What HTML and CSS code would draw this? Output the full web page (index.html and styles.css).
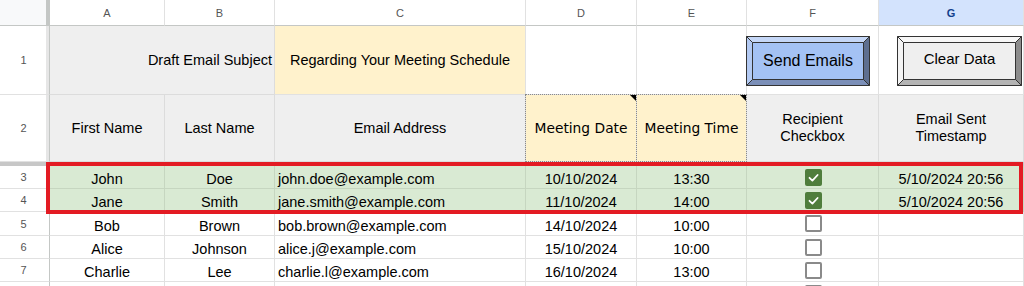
FILE: index.html
```html
<!DOCTYPE html>
<html>
<head>
<meta charset="utf-8">
<link rel="stylesheet" href="styles.css">
</head>
<body>
<div class="sheet">
  <div class="grid">
    <div class="corner"></div>
    <div class="colhead">A</div>
    <div class="colhead">B</div>
    <div class="colhead">C</div>
    <div class="colhead">D</div>
    <div class="colhead">E</div>
    <div class="colhead">F</div>
    <div class="colhead sel">G</div>

    <div class="rownum band">1</div>
    <div class="cell gray right span2">Draft Email Subject</div>
    <div class="cell yellow center">Regarding Your Meeting Schedule</div>
    <div class="cell"></div>
    <div class="cell"></div>
    <div class="cell btncell send-cell">
      <div class="btn send">
        <svg class="bevel" viewBox="0 0 124 50" preserveAspectRatio="none">
          <rect x="6.5" y="6.5" width="111" height="37" fill="#a4c2f4" stroke="#333" stroke-width="1"/>
          <polygon points="0.5,0.5 123.5,0.5 117.5,6.5 6.5,6.5" fill="#c5d7f7" stroke="#333" stroke-width="1"/>
          <polygon points="0.5,0.5 6.5,6.5 6.5,43.5 0.5,49.5" fill="#b3caf3" stroke="#333" stroke-width="1"/>
          <polygon points="123.5,0.5 123.5,49.5 117.5,43.5 117.5,6.5" fill="#5e6f90" stroke="#333" stroke-width="1"/>
          <polygon points="0.5,49.5 6.5,43.5 117.5,43.5 123.5,49.5" fill="#7b8fb8" stroke="#333" stroke-width="1"/>
        </svg>
        <span class="btn-label">Send Emails</span>
      </div>
    </div>
    <div class="cell btncell clear-cell">
      <div class="btn clear">
        <svg class="bevel" viewBox="0 0 125 50" preserveAspectRatio="none">
          <rect x="6.5" y="6.5" width="112" height="37" fill="#efefef" stroke="#333" stroke-width="1"/>
          <polygon points="0.5,0.5 124.5,0.5 118.5,6.5 6.5,6.5" fill="#f7f7f7" stroke="#333" stroke-width="1"/>
          <polygon points="0.5,0.5 6.5,6.5 6.5,43.5 0.5,49.5" fill="#f4f4f4" stroke="#333" stroke-width="1"/>
          <polygon points="124.5,0.5 124.5,49.5 118.5,43.5 118.5,6.5" fill="#8c8c8c" stroke="#333" stroke-width="1"/>
          <polygon points="0.5,49.5 6.5,43.5 118.5,43.5 124.5,49.5" fill="#b4b4b4" stroke="#333" stroke-width="1"/>
        </svg>
        <span class="btn-label small">Clear Data</span>
      </div>
    </div>

    <div class="rownum band">2</div>
    <div class="cell gray center">First Name</div>
    <div class="cell gray center">Last Name</div>
    <div class="cell gray center">Email Address</div>
    <div class="cell yellow center note dotted verd">Meeting Date</div>
    <div class="cell yellow center note dotted verd">Meeting Time</div>
    <div class="cell gray center two">Recipient<br>Checkbox</div>
    <div class="cell gray center two">Email Sent<br>Timestamp</div>

    <div class="freeze"></div>

    <div class="rownum">3</div>
    <div class="cell data green center">John</div>
    <div class="cell data green center">Doe</div>
    <div class="cell data green">john.doe@example.com</div>
    <div class="cell data green center">10/10/2024</div>
    <div class="cell data green center">13:30</div>
    <div class="cell green chk"><span class="box on"><svg viewBox="0 0 17 17"><path d="M4.5 8.8 L7.4 11.6 L12.6 6" fill="none" stroke="#fff" stroke-width="1.8" stroke-linecap="round" stroke-linejoin="round"/></svg></span></div>
    <div class="cell data green center">5/10/2024 20:56</div>

    <div class="rownum">4</div>
    <div class="cell data green center">Jane</div>
    <div class="cell data green center">Smith</div>
    <div class="cell data green">jane.smith@example.com</div>
    <div class="cell data green center">11/10/2024</div>
    <div class="cell data green center">14:00</div>
    <div class="cell green chk"><span class="box on"><svg viewBox="0 0 17 17"><path d="M4.5 8.8 L7.4 11.6 L12.6 6" fill="none" stroke="#fff" stroke-width="1.8" stroke-linecap="round" stroke-linejoin="round"/></svg></span></div>
    <div class="cell data green center">5/10/2024 20:56</div>

    <div class="rownum">5</div>
    <div class="cell data center">Bob</div>
    <div class="cell data center">Brown</div>
    <div class="cell data">bob.brown@example.com</div>
    <div class="cell data center">14/10/2024</div>
    <div class="cell data center">10:00</div>
    <div class="cell chk"><span class="box"></span></div>
    <div class="cell data"></div>

    <div class="rownum">6</div>
    <div class="cell data center">Alice</div>
    <div class="cell data center">Johnson</div>
    <div class="cell data">alice.j@example.com</div>
    <div class="cell data center">15/10/2024</div>
    <div class="cell data center">10:00</div>
    <div class="cell chk"><span class="box"></span></div>
    <div class="cell data"></div>

    <div class="rownum">7</div>
    <div class="cell data center">Charlie</div>
    <div class="cell data center">Lee</div>
    <div class="cell data">charlie.l@example.com</div>
    <div class="cell data center">16/10/2024</div>
    <div class="cell data center">13:00</div>
    <div class="cell chk"><span class="box"></span></div>
    <div class="cell data"></div>

    <div class="rownum"></div>
    <div class="cell data"></div>
    <div class="cell data"></div>
    <div class="cell data"></div>
    <div class="cell data"></div>
    <div class="cell data"></div>
    <div class="cell chk"><span class="box"></span></div>
    <div class="cell data"></div>
  </div>
  <div class="highlight"></div>
</div>
</body>
</html>
```

FILE: styles.css
```css
html, body {
  margin: 0;
  padding: 0;
  background: #ffffff;
  overflow: hidden;
}

body {
  font-family: "Liberation Sans", Arial, sans-serif;
  color: #000;
}

.sheet {
  position: relative;
  width: 1024px;
  height: 286px;
  overflow: hidden;
}

.grid {
  display: grid;
  grid-template-columns: 50px 115px 110px 251px 111px 110px 132px 145px;
  grid-template-rows: 26px 69px 67px 4px 23px 23px 24px 23px 23px 23px;
}

.grid > div {
  box-sizing: border-box;
}

.corner {
  background: #f8f9fa;
  border-right: 4px solid #c4c7c5;
  border-bottom: 1px solid #c4c7c5;
}

.colhead {
  display: flex;
  align-items: center;
  justify-content: center;
  font-size: 11px;
  color: #555;
  background: #fff;
  border-right: 1px solid #e1e1e1;
  border-bottom: 1px solid #c4c7c5;
}

.colhead.sel {
  background: #d3e3fd;
  color: #123f8c;
  font-weight: bold;
}

.rownum {
  display: flex;
  align-items: center;
  justify-content: center;
  font-size: 11px;
  color: #555;
  background: #fff;
  border-right: 1px solid #c4c7c5;
  border-bottom: 1px solid #e1e1e1;
  padding-right: 2px;
}

.rownum.band {
  box-shadow: inset -3px 0 0 #e6e6e6;
}

.cell {
  display: flex;
  align-items: center;
  font-size: 14.5px;
  line-height: 17px;
  padding: 0 3px;
  white-space: nowrap;
  border-right: 1px solid #e1e1e1;
  border-bottom: 1px solid #e1e1e1;
  position: relative;
}

.span2 {
  grid-column: span 2;
}

.gray {
  background: #efefef;
  border-color: #dcdcdc;
}

.yellow {
  background: #fff2cc;
}

.green {
  background: #d9ead3;
  border-color: #c6d6c0;
}

.center {
  justify-content: center;
  text-align: center;
}

.right {
  justify-content: flex-end;
  padding-right: 2px;
}

.two {
  white-space: normal;
  line-height: 17.5px;
}

.verd {
  font-family: "DejaVu Sans", Verdana, sans-serif;
  font-size: 13.8px;
}

.dotted::before {
  content: "";
  position: absolute;
  top: -1px;
  left: -1px;
  right: -1px;
  bottom: -1px;
  border: 1px dotted #8a8a8a;
  pointer-events: none;
}

.note::after {
  content: "";
  position: absolute;
  top: 0;
  right: 0;
  width: 0;
  height: 0;
  border-top: 6px solid #000;
  border-left: 6px solid transparent;
}

.data {
  align-items: flex-end;
  padding-bottom: 0;
}

.freeze {
  grid-column: 1 / -1;
  background: #c7c7c7;
}

.chk {
  justify-content: center;
  padding: 0;
}

.box {
  box-sizing: border-box;
  display: block;
  width: 17px;
  height: 17px;
  border: 2px solid #8a8a8a;
  border-radius: 2px;
  background: #fff;
  margin-left: 1px;
}

.box.on {
  border: none;
  background: #4f7d3c;
}

.box svg {
  display: block;
  width: 17px;
  height: 17px;
}

.btncell {
  padding: 0;
}

.send-cell {
  justify-content: flex-start;
}

.clear-cell {
  justify-content: flex-start;
}

.btn {
  position: relative;
  height: 50px;
  display: flex;
  align-items: center;
  justify-content: center;
}

.btn.send {
  width: 124px;
  margin-left: -1px;
  margin-top: 1px;
}

.btn.clear {
  width: 125px;
  margin-left: 18px;
  margin-top: 1px;
}

.bevel {
  position: absolute;
  top: 0;
  left: 0;
  width: 100%;
  height: 100%;
}

.btn-label {
  position: relative;
  font-size: 16px;
  line-height: 18px;
  color: #000;
}

.btn-label.small {
  font-size: 15px;
  margin-top: -3px;
}

.highlight {
  position: absolute;
  left: 46px;
  top: 162px;
  width: 977px;
  height: 52px;
  box-sizing: border-box;
  border: 4px solid #e31b23;
  pointer-events: none;
}
```
